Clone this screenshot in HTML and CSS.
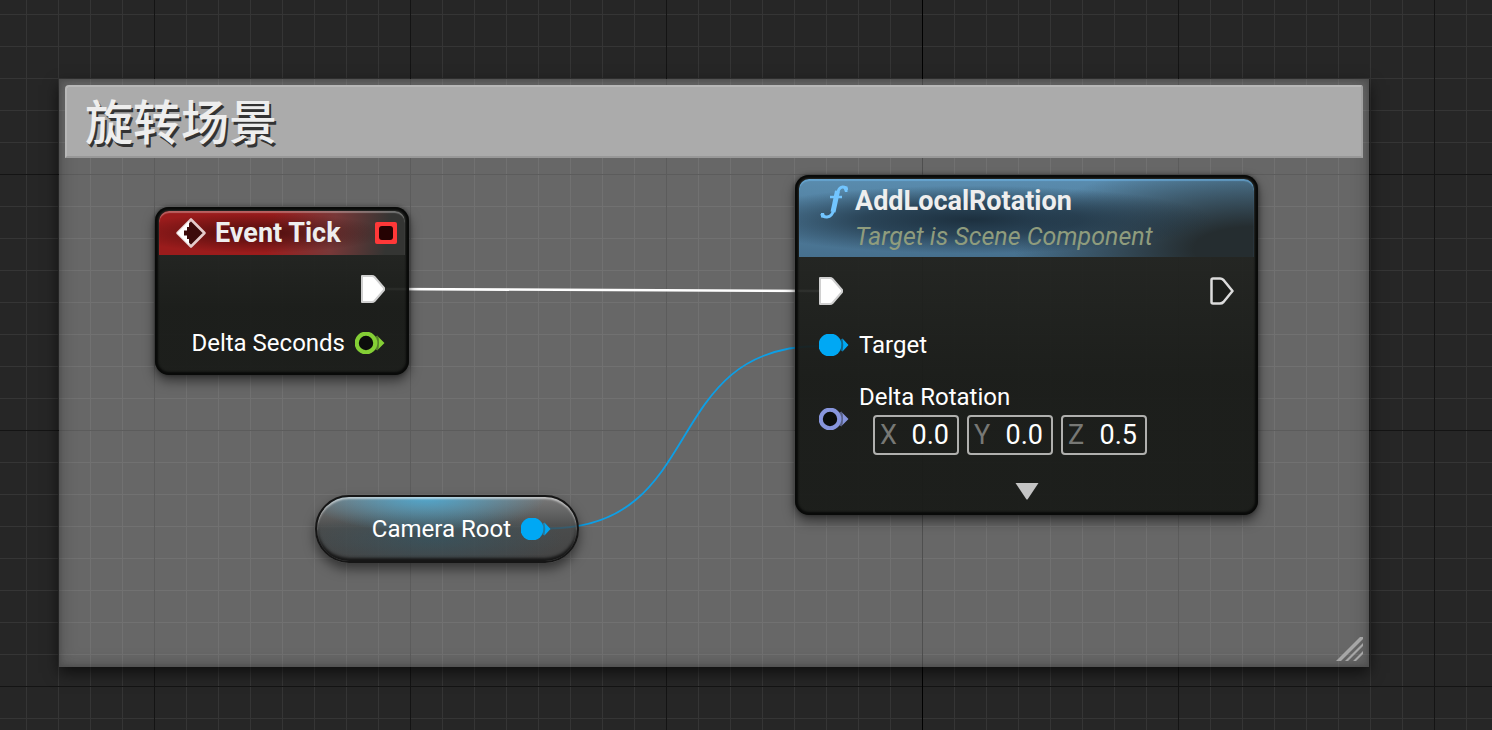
FILE: index.html
```html
<!DOCTYPE html>
<html lang="zh-CN">
<head>
<meta charset="utf-8">
<title>Blueprint Graph</title>
<link rel="stylesheet" href="styles.css">
</head>
<body>
<svg class="defs" width="0" height="0" aria-hidden="true">
  <symbol id="exec-full" viewBox="0 0 24 28"><path d="M1 1H11Q12.500 1 13.500 2L23 13V15L13.500 26Q12.500 27 11 27H1Z" fill="#fff" stroke="#d0d0d0" stroke-width="2" stroke-linejoin="round"/></symbol>
  <symbol id="exec-empty" viewBox="0 0 24 28"><path d="M1.500 3Q1.500 1.500 3 1.500H10Q12 1.500 13.500 3L22.500 14L13.500 25Q12 26.500 10 26.500H3Q1.500 26.500 1.500 25Z" fill="#1b1d1a" stroke="#dcdcdc" stroke-width="2.500" stroke-linejoin="round"/></symbol>
  <symbol id="pin-full" viewBox="0 0 30 22"><circle cx="11" cy="11" r="11.500" fill="currentColor"/><path d="M23.500 4.500L29.500 11L23.500 17.500Q25 11 23.500 4.500Z" fill="currentColor"/><path d="M22.500 5Q25 11 22.500 17" fill="none" stroke="currentColor" stroke-opacity=".5" stroke-width="2.500"/></symbol>
  <symbol id="pin-empty" viewBox="0 0 30 22"><circle cx="11" cy="11" r="9.300" fill="#0b0d0b" stroke="currentColor" stroke-width="4.200"/><path d="M23 4.500L29.500 11L23 17.500Q25 11 23 4.500Z" fill="currentColor"/><path d="M21.500 4Q24.500 11 21.500 18" fill="none" stroke="currentColor" stroke-opacity=".55" stroke-width="2.500"/></symbol>
</svg>
<main class="graph">
  <section class="comment">
    <h1 class="comment-title">旋转场景</h1>
    <svg class="comment-grip" width="28" height="24" viewBox="0 0 28 24" aria-hidden="true"><path d="M1 24L25 0H28V2L6 24ZM10 24L28 6V9L13 24ZM18 24L28 14V17L21 24Z" fill="#a6a6a6"/></svg>
  </section>

  <svg class="wires" aria-hidden="true">
    <path d="M384 289L820 291" stroke="#fff" stroke-width="2.600"/>
    <path d="M548 528.500C709 528.500 658 346 820 346" stroke="#0d9fe6" stroke-width="1.800"/>
  </svg>

  <article class="node node-event">
    <header class="node-head head-event">
      <svg width="32" height="32" viewBox="0 0 32 32" aria-hidden="true"><path d="M16 2.500L29.500 16L16 29.500L2.500 16Z" fill="#3c0b0b" stroke="#e4cccc" stroke-width="2.600" stroke-linejoin="round"/><path d="M14 4L2 16L14 28V22H12V18.500H9V13.500H12V10H14Z" fill="#fff"/></svg>
      <h2 class="node-title">Event Tick</h2>
      <svg class="delegate" width="22" height="22" viewBox="0 0 22 22" aria-hidden="true"><rect width="22" height="22" rx="2" fill="#ff3838"/><rect x="4" y="4" width="14" height="14" rx="3" fill="#250202"/></svg>
    </header>
    <div class="node-body body-event">
      <svg width="24" height="28"><use href="#exec-full"/></svg>
      <div class="pin-row"><span>Delta Seconds</span><svg class="pin-float" width="30" height="22"><use href="#pin-empty"/></svg></div>
    </div>
  </article>

  <article class="node node-function">
    <header class="node-head head-function">
      <svg class="fn-icon" width="28" height="34" viewBox="0 0 28 34" aria-hidden="true"><path d="M27 5Q26 1.800 22.500 2Q18.500 2.300 17 10L14 24Q12.300 31.500 7 32Q3 32.300 1.500 29" fill="none" stroke="#72c5ff" stroke-width="3"/><path d="M17.500 6L13 27" stroke="#72c5ff" stroke-width="5"/><path d="M10 12H22" stroke="#72c5ff" stroke-width="2.500"/><path d="M23 1.500H27.500V7H25ZM1 28H4L5.500 32.500H1Z" fill="#72c5ff"/></svg>
      <div>
        <h2 class="node-title">AddLocalRotation</h2>
        <p class="node-subtitle">Target is Scene Component</p>
      </div>
    </header>
    <div class="node-body body-function">
      <div class="exec-row">
        <svg width="24" height="28"><use href="#exec-full"/></svg>
        <svg width="24" height="28"><use href="#exec-empty"/></svg>
      </div>
      <div class="pin-row"><svg class="pin-object" width="30" height="22"><use href="#pin-full"/></svg><span>Target</span></div>
      <div class="pin-row rotation-row">
        <svg class="pin-rotator" width="30" height="22"><use href="#pin-empty"/></svg>
        <fieldset class="rotation">
          <legend>Delta Rotation</legend>
          <div class="vector">
            <label class="axis">X<input type="text" value="0.0"></label>
            <label class="axis">Y<input type="text" value="0.0"></label>
            <label class="axis">Z<input type="text" value="0.5"></label>
          </div>
        </fieldset>
      </div>
      <button class="expand" type="button" aria-label="Show advanced pins"><svg width="24" height="18" viewBox="0 0 24 18" aria-hidden="true"><path d="M.5 1H23.500L12.500 17.500H11.500Z" fill="#c4c4c4"/></svg></button>
    </div>
  </article>

  <article class="node-variable">
    <span>Camera Root</span>
    <svg class="pin-object" width="30" height="22"><use href="#pin-full"/></svg>
  </article>
</main>
</body>
</html>
```
FILE: styles.css
```css
* { box-sizing: border-box; }

body {
  margin: 0;
  background: #262626;
  color: #fff;
  font: 24px/28px Roboto, "Noto Sans CJK SC", sans-serif;
}

h1, h2, p { margin: 0; }
svg { display: block; flex: none; }
.defs { position: absolute; }

.graph {
  position: relative;
  min-height: 100vh;
  overflow: hidden;
  background-color: #262626;
  background-image:
    linear-gradient(#000, #000),
    linear-gradient(90deg, #141414 1px, transparent 1px),
    linear-gradient(#141414 1px, transparent 1px),
    linear-gradient(90deg, #353535 1px, transparent 1px),
    linear-gradient(#353535 1px, transparent 1px);
  background-repeat: no-repeat, repeat, repeat, repeat, repeat;
  background-size: 1px 100%, 256px 256px, 256px 256px, 32px 32px, 32px 32px;
  background-position: 922px 0, 154px 174px, 154px 174px, 26px 14px, 26px 14px;
}

.comment {
  position: absolute;
  left: 59px;
  top: 79px;
  width: 1310px;
  height: 588px;
  padding: 6px;
  background: rgba(226, 226, 226, .35);
  box-shadow:
    0 6px 14px rgba(0, 0, 0, .6),
    inset 0 0 4px 2px rgba(40, 40, 40, .2),
    inset 0 0 16px 2px rgba(30, 30, 30, .25);
}

.comment-title {
  padding: 0 18px 4px;
  border: 2px solid #b8b8b8;
  border-right-color: #a2a2a2;
  border-bottom-color: #989898;
  border-radius: 4px 2px 0 0;
  background: #ababab;
  color: #eee;
  font: 500 48px/65px "Noto Sans CJK SC", sans-serif;
  text-shadow: 2px 3px 0 #333;
}

.comment-grip {
  position: absolute;
  right: 6px;
  bottom: 6px;
}

.wires {
  position: absolute;
  inset: 0;
  width: 100%;
  height: 100%;
  fill: none;
}

.node {
  position: absolute;
  padding: 4px;
  border-radius: 14px;
  background: linear-gradient(rgba(34, 36, 33, .9), rgba(24, 26, 23, .94) 60%);
  box-shadow:
    0 6px 12px rgba(0, 0, 0, .5),
    0 0 4px rgba(0, 0, 0, .4),
    inset 0 0 2px 3px #090a09;
}

.node-event { left: 155px; top: 207px; width: 254px; }
.node-function { left: 795px; top: 175px; width: 463px; }

.node-head {
  display: flex;
  border-radius: 10px 10px 0 0;
}

.node-title {
  color: #eee;
  font-size: 27px;
  font-weight: 700;
  line-height: 32px;
}

.head-event {
  align-items: center;
  gap: 8px;
  height: 44px;
  padding: 0 8px 0 16px;
  background:
    radial-gradient(ellipse 130px 20px at 40% 50%, rgba(50, 8, 8, .75), transparent),
    linear-gradient(100deg, #9b1c1c 0 45%, #783838 70%, #343533 92%);
  box-shadow: inset 0 2px 1px rgba(255, 255, 255, .3);
}

.delegate { margin-left: auto; }

.head-function {
  gap: 7px;
  height: 78px;
  padding: 6px 20px 0 21px;
  background:
    radial-gradient(ellipse 240px 34px at 38% 52%, rgba(26, 44, 58, .95), rgba(26, 44, 58, .7) 45%, transparent),
    radial-gradient(ellipse 240px 90px at 100% 90%, #252d30 25%, transparent),
    linear-gradient(#5a8cae, #47708e);
  box-shadow: inset 0 2px 1px rgba(110, 180, 230, .6);
}

.node-subtitle {
  margin-top: 6px;
  color: #8f9c7d;
  font-size: 25px;
  font-style: italic;
}

.node-body {
  display: flex;
  flex-direction: column;
}

.body-event {
  align-items: flex-end;
  gap: 26px;
  padding: 20px 20px 14px;
}

.body-function { padding: 20px 20px 8px; }

.exec-row {
  display: flex;
  justify-content: space-between;
  margin-bottom: 26px;
}

.pin-row {
  display: flex;
  align-items: center;
  gap: 10px;
}

.pin-float { color: #84cf35; }
.pin-object { color: #00a8f4; }
.pin-rotator { color: #8795dc; }

.rotation-row { margin-top: 24px; }

.rotation {
  min-width: 0;
  margin: 0;
  padding: 0;
  border: 0;
}

.rotation legend { padding: 0; }

.vector {
  display: flex;
  gap: 8px;
  margin-top: 4px;
  padding-left: 14px;
}

.axis {
  display: flex;
  align-items: center;
  width: 86px;
  height: 40px;
  padding: 0 8px 0 5px;
  border: 2px solid #b0b0ae;
  border-radius: 4px;
  color: #777875;
  font-size: 27px;
}

.axis input {
  flex: 1;
  min-width: 0;
  padding: 0;
  border: 0;
  background: none;
  color: #fff;
  font: inherit;
  text-align: right;
}

.expand {
  align-self: center;
  margin-top: 24px;
  padding: 3px;
  border: 0;
  background: none;
}

.node-variable {
  position: absolute;
  left: 315px;
  top: 495px;
  display: flex;
  align-items: center;
  justify-content: flex-end;
  gap: 10px;
  width: 264px;
  height: 68px;
  padding: 0 26px 0 0;
  border: 2px solid #161616;
  border-radius: 34px;
  background:
    radial-gradient(ellipse 120px 36px at 42% 0, rgba(74, 175, 220, .85), transparent),
    radial-gradient(ellipse 130px 30px at 45% 65%, rgba(45, 90, 108, .5), transparent),
    linear-gradient(rgba(125, 125, 125, .85), rgba(64, 66, 66, .75) 50%, rgba(62, 62, 62, .85));
  box-shadow:
    0 6px 12px rgba(0, 0, 0, .5),
    inset 0 2px 2px rgba(255, 255, 255, .55),
    inset 0 -3px 3px #161616;
}
```
